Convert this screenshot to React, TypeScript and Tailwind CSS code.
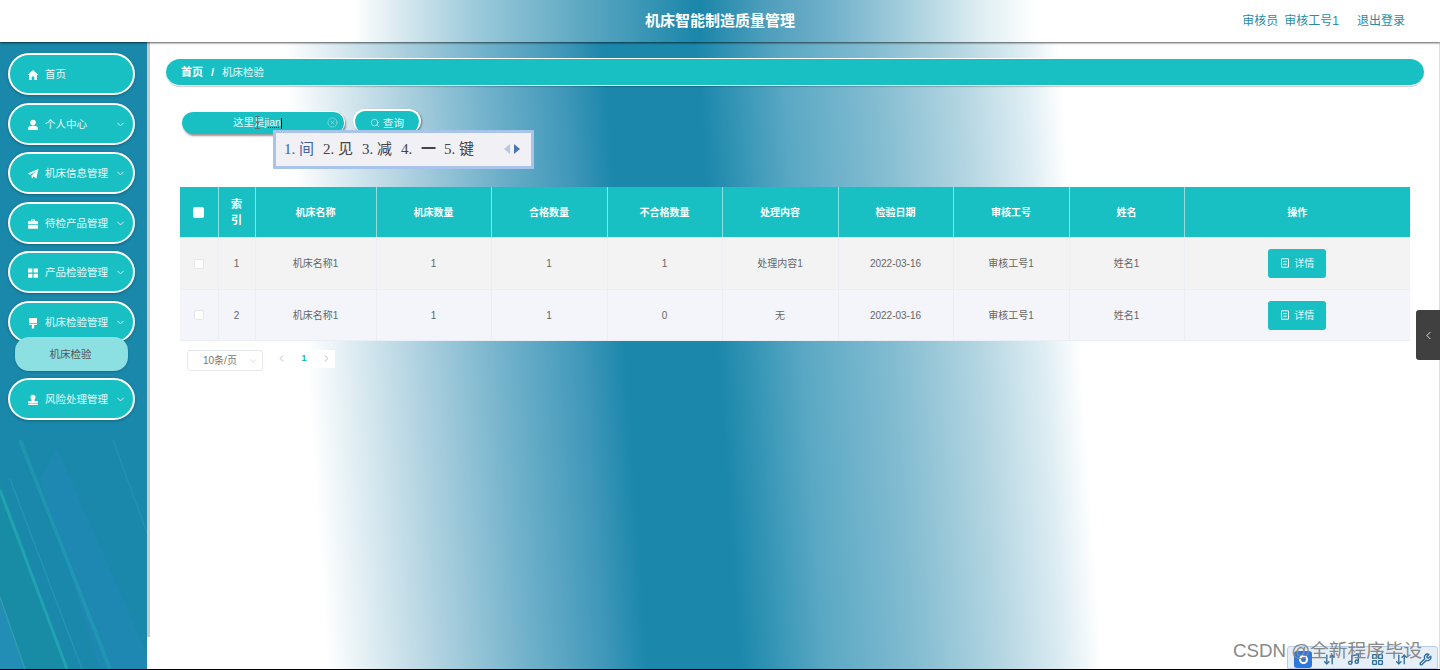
import React from "react";
import { ChevronDown, ChevronLeft, ChevronRight, Search, CircleX, Music, Wrench, LayoutGrid, ArrowDownUp } from "lucide-react";

const FONT = "font-['Liberation_Sans','Noto_Sans_CJK_SC',sans-serif]";

function Ico({ name }: { name: string }) {
  const c = "w-[12px] h-[12px] fill-white shrink-0";
  switch (name) {
    case "home":
      return <svg viewBox="0 0 12 12" className={c}><path d="M6 1 L11.4 6 L10 6 L10 11 L7.3 11 L7.3 7.6 L4.7 7.6 L4.7 11 L2 11 L2 6 L.6 6 Z" /></svg>;
    case "user":
      return <svg viewBox="0 0 12 12" className={c}><circle cx="6" cy="3.6" r="2.8" /><path d="M1.2 11 V9.2 C1.2 7.6 3 6.8 6 6.8 C9 6.8 10.8 7.6 10.8 9.2 V11 Z" /></svg>;
    case "send":
      return <svg viewBox="0 0 12 12" className={c}><path d="M11.5 1 L9.3 10.6 L6.3 8.6 L5 11 L4.4 7.6 L9.6 2.8 L3.2 6.8 L.5 5.6 Z" /></svg>;
    case "case":
      return <svg viewBox="0 0 12 12" className={c}><path d="M4 1.5 H8 V3 H11 V6.2 H1 V3 H4 Z M5 2.4 V3 H7 V2.4 Z M1 7 H11 V10.8 H1 Z" /></svg>;
    case "grid":
      return <svg viewBox="0 0 12 12" className={c}><path d="M1 1.5 H5.4 V5.5 H1 Z M6.6 1.5 H11 V5.5 H6.6 Z M1 6.7 H5.4 V10.7 H1 Z M6.6 6.7 H11 V10.7 H6.6 Z" /></svg>;
    case "brush":
      return <svg viewBox="0 0 12 12" className={c}><path d="M2 1 H10 V6 H2 Z M2 6.8 H10 V8 H7.2 V11.4 H4.8 V8 H2 Z" /></svg>;
    default:
      return <svg viewBox="0 0 12 12" className={c}><circle cx="6" cy="3.2" r="2.5" /><path d="M4.8 5 H7.2 L7.6 7 H10.8 V9.4 H1.2 V7 H4.4 Z M1.2 10 H10.8 V11 H1.2 Z" /></svg>;
  }
}

function NavItem({ icon, label, arrow = true, className = "" }: { icon: string; label: string; arrow?: boolean; className?: string }) {
  return (
    <div className={`relative flex items-center h-[42px] w-[127px] ml-[8px] rounded-[21px] border-[2px] border-white bg-[#18bfc3] pl-[17px] pr-[7px] pt-[1px] shadow-[0_1px_3px_rgba(0,0,0,0.25)] ${className}`}>
      <Ico name={icon} />
      <span className="ml-[6px] text-[10.5px] text-white/90 flex-1 whitespace-nowrap">{label}</span>
      {arrow && <ChevronDown className="w-[11px] h-[11px] text-white shrink-0" strokeWidth={1.75} />}
    </div>
  );
}

const COLS = ["w-[38px]", "w-[37px]", "w-[121px]", "w-[115px]", "w-[116px]", "w-[115px]", "w-[116px]", "w-[115px]", "w-[116px]", "w-[115px]", "w-[226px]"];
const HEADS = ["机床名称", "机床数量", "合格数量", "不合格数量", "处理内容", "检验日期", "审核工号", "姓名", "操作"];
const ROWS = [
  ["1", "机床名称1", "1", "1", "1", "处理内容1", "2022-03-16", "审核工号1", "姓名1"],
  ["2", "机床名称1", "1", "1", "0", "无", "2022-03-16", "审核工号1", "姓名1"],
];

function Row({ cells, bg, height }: { cells: string[]; bg: string; height: string }) {
  return (
    <tr className={`${height} ${bg}`}>
      <td className="border-r border-b border-[#ebeef5] text-center">
        <span className="inline-block w-[10px] h-[10px] rounded-[2px] bg-white border border-[#e8e8e8] align-middle" />
      </td>
      {cells.map((t, i) => (
        <td key={i} className="border-r border-b border-[#ebeef5] text-center text-[10px] text-[#666] pt-[2px]">{t}</td>
      ))}
      <td className="border-b border-[#ebeef5] text-center pt-[1px]">
        <span className="inline-flex items-center justify-center gap-[4px] w-[58px] h-[29px] rounded-[3px] bg-[#18bfc3] text-white/90 text-[10px]">
          <svg viewBox="0 0 10 10" className="w-[10px] h-[10px] fill-none stroke-white"><path d="M1.5 .8 H8.5 V9.2 H1.5 Z M3.2 3.6 H6.8 M3.2 6.2 H6.8" strokeWidth="0.9" /></svg>
          详情
        </span>
      </td>
    </tr>
  );
}

function Stripes() {
  return (
    <svg viewBox="0 0 147 250" preserveAspectRatio="none" className="absolute left-0 bottom-0 w-[147px] h-[250px]">
      <path d="M0 60 L60 230 L70 250 L0 250 Z" fill="#1a8fa3" opacity="0.7" />
      <path d="M0 178 L25 250 L0 250 Z" fill="#2a8fc0" opacity="0.6" />
      <path d="M57 30 L147 235 L147 250 L100 250 L40 60 Z" fill="#2188b8" opacity="0.6" />
      <g fill="none">
        <path d="M20 21 L110 250" stroke="#26a9b5" strokeWidth="3.5" opacity="0.45" />
        <path d="M0 71 L67 250" stroke="#27b0ba" strokeWidth="3" opacity="0.6" />
        <path d="M10 60 L82 250" stroke="#2fa9c0" strokeWidth="1.2" opacity="0.45" />
        <path d="M0 178 L25 250" stroke="#3fa5b0" strokeWidth="1.2" opacity="0.7" />
        <path d="M113 21 L147 114" stroke="#36a1bc" strokeWidth="1.2" opacity="0.4" />
      </g>
    </svg>
  );
}

export default function App() {
  return (
    <div className={`relative w-[1440px] h-[670px] overflow-hidden bg-white flex flex-col border-b border-black ${FONT}`}>
      {/* top bar */}
      <header className="relative z-20 h-[42px] shrink-0 flex items-center bg-[linear-gradient(90deg,#ffffff_24.5%,#d6e8ee_28%,#9ccadb_33%,#69aec6_39%,#1a86aa_48.5%,#4c9dbb_53%,#74b2cc_58%,#a6cfdd_63%,#deedf2_68%,#ffffff_72%)] shadow-[0_1px_2px_rgba(0,0,0,0.65)]">
        <div className="flex-1" />
        <h1 className="absolute left-[645px] text-[15px] font-bold text-white whitespace-nowrap">机床智能制造质量管理</h1>
        <div className="flex items-center text-[12px] text-[#2a8ba3] pr-[35px] whitespace-nowrap">
          <span>审核员</span>
          <span className="ml-[6px]">审核工号1</span>
          <span className="ml-[18px]">退出登录</span>
        </div>
      </header>

      <div className="flex-1 flex min-h-0">
        {/* sidebar */}
        <aside className="relative w-[147px] shrink-0 bg-[#1a88ab] overflow-hidden">
          <Stripes />
          <nav className="relative flex flex-col pt-[11px]">
            <NavItem icon="home" label="首页" arrow={false} />
            <NavItem icon="user" label="个人中心" className="mt-[8px]" />
            <NavItem icon="send" label="机床信息管理" className="mt-[7px]" />
            <NavItem icon="case" label="待检产品管理" className="mt-[8px]" />
            <NavItem icon="grid" label="产品检验管理" className="mt-[7px]" />
            <NavItem icon="brush" label="机床检验管理" className="mt-[8px]" />
            <div className="relative z-10 ml-[15px] -mt-[6px] w-[113px] h-[34px] rounded-[14px] bg-[#8ce0e2] flex items-center justify-center text-[10.5px] text-[#555] pt-[1px] pr-[2px] shadow-[0_1px_2px_rgba(0,0,0,0.2)]">机床检验</div>
            <NavItem icon="stamp" label="风险处理管理" className="mt-[7px]" />
          </nav>
        </aside>
        <div className="w-[3px] h-[595px] shrink-0 bg-[#c9c9c9]" />

        {/* main */}
        <main className="relative flex-1 min-w-0 border-r border-[#dddddd] bg-[linear-gradient(86deg,#ffffff_13.3%,#b0d2e0_21.7%,#72b2cb_28.2%,#3f97b9_34.2%,#1a87ab_37.4%,#1a87ab_44.2%,#5aa8c4_50.7%,#83bcd1_57.5%,#b3d5e1_63.8%,#deedf3_68.7%,#ffffff_71.5%)]">
          <div className="ml-[16px] mt-[16px] w-[1258px] h-[28px] rounded-[14px] border-y border-white bg-[#18bfc3] flex items-center pl-[15px] pt-[1px] text-[11px] text-white whitespace-nowrap shadow-[0_1px_1px_rgba(0,0,0,0.2)]">
            <span className="font-bold">首页</span>
            <span className="mx-[8px] font-bold">/</span>
            <span className="text-[10.5px] text-white/90">机床检验</span>
          </div>

          <div className="flex items-start ml-[32px] mt-[23px]">
            <div className="relative mt-[2px] w-[163px] h-[23px] rounded-[12px] bg-[#18bfc3] border-t border-r border-white shadow-[1px_2px_2px_rgba(0,0,0,0.4)] flex items-center pl-[51px] text-[10.5px] text-white/90 whitespace-nowrap">
              <span>这里是</span>
              <span className="underline decoration-dotted decoration-black/70">jian</span>
              <span className="w-[1px] h-[11px] bg-black" />
              <CircleX className="absolute right-[6px] top-[5px] w-[11px] h-[11px] text-white/50" strokeWidth={1.5} />
            </div>
            <div className="ml-[8px] w-[68px] h-[24px] rounded-[12px] bg-[#18bfc3] border-t-2 border-x-2 border-white shadow-[1px_1px_2px_rgba(0,0,0,0.4)] flex items-center justify-center gap-[3px] text-[10.5px] text-white/90">
              <Search className="w-[10px] h-[10px] mt-[2px]" strokeWidth={1.5} />
              <span className="mt-[3px]">查询</span>
            </div>
          </div>

          <table className="ml-[30px] mt-[53px] w-[1230px] table-fixed border-collapse">
            <colgroup>{COLS.map((c, i) => <col key={i} className={c} />)}</colgroup>
            <thead>
              <tr className="h-[50px] bg-[#18bfc3] text-white text-[10px] font-bold">
                <th className="border-r border-[#8fdfe1] text-center">
                  <span className="inline-block w-[11px] h-[11px] rounded-[2px] bg-white align-middle" />
                </th>
                <th className="border-r border-[#8fdfe1] text-[11px] leading-[16px] font-bold">索<br />引</th>
                {HEADS.map((h, i) => (
                  <th key={h} className={i < HEADS.length - 1 ? "border-r border-[#8fdfe1] font-bold pt-[1px]" : "font-bold pt-[1px]"}>{h}</th>
                ))}
              </tr>
            </thead>
            <tbody>
              <Row cells={ROWS[0]} bg="bg-[#f3f3f3]" height="h-[52px]" />
              <Row cells={ROWS[1]} bg="bg-[#f3f5fa]" height="h-[51px]" />
            </tbody>
          </table>

          <div className="flex items-start ml-[37px] mt-[9px]">
            <div className="relative w-[76px] h-[21px] rounded-[3px] bg-white border border-[#e4e7ed] flex items-center pl-[15px] text-[10px] text-[#777]">
              10条/页
              <ChevronDown className="absolute right-[4px] top-[5px] w-[10px] h-[10px] text-[#c0c4cc]" strokeWidth={1.5} />
            </div>
            <div className="ml-[7px] w-[65px] h-[18px] bg-white flex items-center justify-between pl-[6px] pr-[3px] text-[9px] font-bold text-[#18b6a0]">
              <ChevronLeft className="w-[11px] h-[11px] text-[#b5b8bd]" strokeWidth={2} />
              <span>1</span>
              <ChevronRight className="w-[11px] h-[11px] text-[#b5b8bd]" strokeWidth={2} />
            </div>
          </div>

          {/* collapse tab */}
          <div className="absolute -right-[1px] top-[268px] w-[24px] h-[50px] rounded-l-[3px] bg-[#404040] flex items-center justify-center">
            <ChevronLeft className="w-[13px] h-[13px] text-white" strokeWidth={1.5} />
          </div>
        </main>
      </div>

      {/* input-method candidate window */}
      <div className="absolute z-30 left-[273px] top-[130px] w-[261px] h-[39px] bg-[#f0f0f5] border-[3px] border-[#a9c4ea] flex items-center pl-[8px] text-[15px] text-[#444] font-['Liberation_Serif','Noto_Sans_CJK_SC',serif] whitespace-nowrap">
        <span className="text-[#3f62a0] w-[39px]">1. 间</span>
        <span className="w-[39px]">2. 见</span>
        <span className="w-[39px]">3. 减</span>
        <span className="w-[43px]">4. <span className="ml-[5px] font-bold">一</span></span>
        <span>5. 键</span>
        <span className="absolute left-[228px] top-[11px] w-0 h-0 border-y-[5px] border-y-transparent border-r-[6px] border-r-[#b6c8e2]" />
        <span className="absolute left-[238px] top-[11px] w-0 h-0 border-y-[5px] border-y-transparent border-l-[6px] border-l-[#4a76b0]" />
      </div>
      {/* text cursor */}
      <svg viewBox="0 0 7 13" className="absolute z-30 left-[254px] top-[116px] w-[7px] h-[13px] fill-none stroke-[#666]">
        <path d="M1 .5 H6 M3.5 .5 V12.5 M1 12.5 H6 M1.5 6.5 H5.5" strokeWidth="0.9" />
      </svg>

      {/* IME toolbar & watermark */}
      <div className="absolute z-30 left-[1287px] bottom-0 w-[151px] h-[23px] rounded-t-[3px] border border-[#b8cde6] bg-[#e6eef8] flex items-end gap-[11px] text-[#2f6f9f]">
        <span className="ml-[6px] w-[18px] h-[17px] rounded-[3px] bg-[#2a78e0] flex items-center justify-center">
          <span className="w-[9px] h-[9px] rounded-full border-2 border-white" />
        </span>
        <ArrowDownUp className="w-[13px] h-[13px] mb-[2px]" strokeWidth={2.5} />
        <Music className="w-[13px] h-[13px] mb-[2px]" strokeWidth={2.5} />
        <LayoutGrid className="w-[13px] h-[13px] mb-[2px]" strokeWidth={2.5} />
        <ArrowDownUp className="w-[13px] h-[13px] mb-[2px]" strokeWidth={2.5} />
        <Wrench className="w-[13px] h-[13px] mb-[2px]" strokeWidth={2.5} />
      </div>
      <div className="absolute z-40 left-[1233px] top-[640px] text-[18.7px] leading-[22px] text-[#888] whitespace-nowrap">CSDN @全新程序毕设</div>
    </div>
  );
}
